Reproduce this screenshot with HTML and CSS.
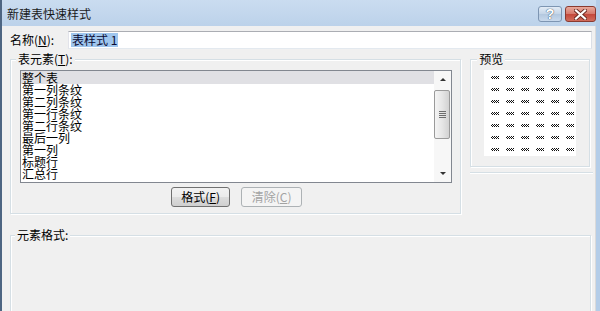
FILE: index.html
```html
<!DOCTYPE html>
<html lang="zh-CN">

<head>
    <meta charset="UTF-8">
    <title>新建表快速样式</title>
    <link rel="stylesheet" href="styles.css">
</head>

<body>
    <div class="window">
        <!-- title bar -->
        <div class="titlebar">
            <span class="title">新建表快速样式</span>
            <div class="caption-buttons">
                <button class="cap-btn help">?</button>
                <button class="cap-btn close">
                    <svg width="13" height="11" viewBox="0 0 13 11">
                        <path d="M2 1.5 L11 9.5 M11 1.5 L2 9.5" stroke="#6b2a22" stroke-width="4" stroke-linecap="square" />
                        <path d="M2 1.5 L11 9.5 M11 1.5 L2 9.5" stroke="#fff" stroke-width="2.2" stroke-linecap="square" />
                    </svg>
                </button>
            </div>
        </div>

        <div class="body">
            <div class="name-row">
                <label class="name-label">名称(<u>N</u>):</label>
                <div class="textbox"><span class="sel">表样式 1</span></div>
            </div>

            <div class="top-row">
                <fieldset class="group elements">
                    <legend>表元素(<u>T</u>):</legend>
                    <div class="listbox">
                        <ul class="items">
                            <li class="selected">整个表</li>
                            <li>第一列条纹</li>
                            <li>第二列条纹</li>
                            <li>第一行条纹</li>
                            <li>第二行条纹</li>
                            <li>最后一列</li>
                            <li>第一列</li>
                            <li>标题行</li>
                            <li>汇总行</li>
                        </ul>
                        <div class="vscroll">
                            <div class="arrow up"></div>
                            <div class="track">
                                <div class="thumb"><span class="grip"></span></div>
                            </div>
                            <div class="arrow down"></div>
                        </div>
                    </div>
                    <div class="actions">
                        <button class="btn">格式(<u>F</u>)</button>
                        <button class="btn" disabled>清除(<u>C</u>)</button>
                    </div>
                </fieldset>

                <div class="side">
                    <fieldset class="group preview">
                        <legend>预览</legend>
                        <div class="preview-grid">
                            <span></span><span></span><span></span><span></span><span></span><span></span>
                            <span></span><span></span><span></span><span></span><span></span><span></span>
                            <span></span><span></span><span></span><span></span><span></span><span></span>
                            <span></span><span></span><span></span><span></span><span></span><span></span>
                            <span></span><span></span><span></span><span></span><span></span><span></span>
                            <span></span><span></span><span></span><span></span><span></span><span></span>
                            <span></span><span></span><span></span><span></span><span></span><span></span>
                        </div>
                    </fieldset>
                    <div class="side-rule"></div>
                </div>
            </div>

            <fieldset class="group format">
                <legend>元素格式:</legend>
                <div class="format-area"></div>
            </fieldset>
        </div>
    </div>
</body>

</html>
```

FILE: styles.css
```css
* {
    box-sizing: border-box;
}

body {
    margin: 0;
    width: 600px;
    height: 311px;
    overflow: hidden;
    font-family: "Noto Sans CJK SC", "Liberation Sans", sans-serif;
    font-size: 12px;
    color: #000;
}

.window {
    width: 600px;
    height: 311px;
    display: flex;
    flex-direction: column;
    border-left: 2px solid #4d6582;
    border-right: 4px solid #b4cde8;
    background-color: #f0f0f0;
}

/* title bar */
.titlebar {
    height: 26px;
    display: flex;
    align-items: flex-start;
    justify-content: space-between;
    padding-left: 5px;
    background: linear-gradient(#cadcf0, #bcd2ea);
}

.title {
    line-height: 14px;
    margin-top: 7px;
    color: #1a1a1a;
}

.caption-buttons {
    display: flex;
    gap: 3px;
    margin-top: 6px;
    margin-right: 0;
}

.cap-btn {
    height: 16px;
    padding: 0;
    border-radius: 3px;
    display: flex;
    align-items: center;
    justify-content: center;
    font-family: "Liberation Sans", sans-serif;
}

.cap-btn.help {
    width: 24px;
    border: 1px solid #7d95b2;
    background: linear-gradient(#e3ecf6, #c3d4e7 50%, #b3c8df 51%, #c8d9ec);
    color: #fff;
    font-size: 14px;
    font-weight: bold;
    text-shadow: 0 0 1px #3b4f66, 0 0 1px #3b4f66;
}

.cap-btn.close {
    width: 31px;
    border: 1px solid #8a3a30;
    background: linear-gradient(#e8a99c, #d5776a 50%, #c4473a 51%, #d06c5c);
}

/* body */
.body {
    flex: 1;
    padding: 0 4px 0 8px;
    border-right: 1px solid #dadada;
    overflow: hidden;
}

.name-row {
    display: flex;
    align-items: center;
    margin-top: 5px;
    height: 18px;
}

.name-label {
    width: 58px;
    line-height: 12px;
}

.textbox {
    flex: 1;
    height: 18px;
    margin-right: -1px;
    padding: 0 0 0 2px;
    display: flex;
    align-items: center;
    background-color: #fff;
    border: 1px solid #abadb3;
    border-color: #abadb3 #dbdfe6 #e3e9ef #e2e3ea;
}

.sel {
    line-height: 14px;
    padding: 0 1px;
    background-color: #9fc6ee;
    color: #0b0b33;
}

.top-row {
    display: flex;
    align-items: flex-start;
    margin-top: 4px;
}

/* group boxes */
.group {
    margin: 0;
    min-width: 0;
    border: 1px solid #d5dfe5;
    box-shadow: inset 1px 1px #fff, 1px 1px #fff;
}

.group legend {
    line-height: 12px;
    padding: 0 2px;
    background-color: #f0f0f0;
}

.elements {
    width: 452px;
    padding: 5px 8px 6px 9px;
}

.elements legend {
    margin-left: -4px;
}

.listbox {
    display: flex;
    height: 113px;
    border: 1px solid #828790;
    background-color: #fff;
}

.items {
    flex: 1;
    list-style: none;
    margin: 0;
    padding: 0;
}

.items li {
    line-height: 12px;
    padding-left: 1px;
}

.items li.selected {
    background-color: #e0e0e4;
    line-height: 13px;
}

.vscroll {
    width: 17px;
    display: flex;
    flex-direction: column;
    background-color: #f7f7f7;
}

.arrow {
    height: 17px;
    display: flex;
    align-items: center;
    justify-content: center;
}

.arrow::after {
    content: "";
    border-left: 3px solid transparent;
    border-right: 3px solid transparent;
}

.arrow.up::after {
    border-bottom: 3px solid #333;
}

.arrow.down::after {
    border-top: 3px solid #333;
}

.track {
    flex: 1;
    padding-top: 2px;
}

.thumb {
    height: 49px;
    margin: 0 1px 0 0;
    border: 1px solid #9a9a9a;
    border-radius: 2px;
    background: linear-gradient(to right, #f4f4f4, #e6e6e6 50%, #d2d2d2);
    display: flex;
    align-items: center;
    justify-content: center;
}

.grip {
    width: 7px;
    height: 7px;
    background: repeating-linear-gradient(#6d6d6d 0 1px, transparent 1px 2px);
}

.actions {
    display: flex;
    justify-content: center;
    gap: 11px;
    margin-top: 4px;
    padding-left: 1px;
}

.btn {
    width: 59px;
    height: 20px;
    padding: 0;
    font: inherit;
    line-height: 12px;
    color: #000;
    border: 1px solid #707070;
    border-radius: 3px;
    background: linear-gradient(#f2f2f2, #ebebeb 50%, #dddddd 51%, #cfcfcf);
}

.btn:disabled {
    width: 61px;
    color: #a3a3a3;
    border-color: #adb2b5;
    background: #f4f4f4;
}

/* preview */
.side {
    width: 121px;
    margin-left: 9px;
}

.preview {
    width: 120px;
    padding: 5px 6px 10px 6px;
}

.preview-grid {
    width: 92px;
    height: 86px;
    margin-left: 7px;
    padding: 6px 0 0 7px;
    background-color: #fff;
    display: grid;
    grid-template-columns: repeat(6, 15px);
    grid-auto-rows: 12px;
}

.preview-grid span {
    width: 8px;
    height: 3px;
    background: repeating-conic-gradient(#111 0 25%, #fff 0 50%) 0 0 / 2px 2px;
}

.side-rule {
    margin-top: 5px;
    margin-right: -2px;
    border-top: 1px solid #d5dfe5;
    border-bottom: 1px solid #fff;
}

/* element format */
.format {
    margin-top: 15px;
    height: 120px;
    padding: 0 4px;
}

.format legend {
    margin-left: 0;
}
```
